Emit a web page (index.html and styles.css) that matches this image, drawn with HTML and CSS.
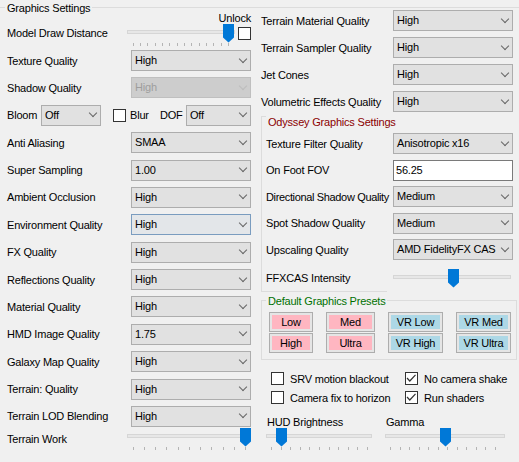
FILE: index.html
```html
<!DOCTYPE html>
<html lang="en">
<head>
  <meta charset="UTF-8">
  <meta name="viewport" content="width=device-width, initial-scale=1.0">
  <title>Graphics Settings</title>
  <link rel="stylesheet" href="styles.css">
</head>
<body>
  <div class="settings">

    <div class="col-left">
      <div class="group-title">Graphics Settings</div>

      <div class="draw-row">
        <span class="unlock-label">Unlock</span>
        <span class="label draw-label">Model Draw Distance</span>
        <div class="slider draw-slider">
          <div class="slider-track"></div>
          <div class="slider-ticks"><i></i><i></i><i></i><i></i><i></i><i></i><i></i><i></i><i></i><i></i><i></i><i></i><i></i><i></i></div>
          <svg class="slider-thumb" style="left: 96px" width="11" height="19" viewBox="0 0 11 19"><path d="M0 0H11V13.5L5.5 18.5L0 13.5Z"/></svg>
        </div>
        <span class="checkbox unlock-box"></span>
      </div>

      <div class="form-rows">
        <span class="label">Texture Quality</span>
        <div class="combo"><span>High</span></div>

        <span class="label">Shadow Quality</span>
        <div class="combo disabled"><span>High</span></div>

        <div class="bloom-row">
          <span class="label bloom-label">Bloom</span>
          <div class="combo bloom-combo"><span>Off</span></div>
          <span class="checkbox blur-box"></span>
          <span class="label blur-label">Blur</span>
          <span class="label dof-label">DOF</span>
          <div class="combo dof-combo"><span>Off</span></div>
        </div>

        <span class="label">Anti Aliasing</span>
        <div class="combo"><span>SMAA</span></div>

        <span class="label">Super Sampling</span>
        <div class="combo"><span>1.00</span></div>

        <span class="label">Ambient Occlusion</span>
        <div class="combo"><span>High</span></div>

        <span class="label">Environment Quality</span>
        <div class="combo focused"><span>High</span></div>

        <span class="label">FX Quality</span>
        <div class="combo"><span>High</span></div>

        <span class="label">Reflections Quality</span>
        <div class="combo"><span>High</span></div>

        <span class="label">Material Quality</span>
        <div class="combo"><span>High</span></div>

        <span class="label">HMD Image Quality</span>
        <div class="combo"><span>1.75</span></div>

        <span class="label">Galaxy Map Quality</span>
        <div class="combo"><span>High</span></div>

        <span class="label">Terrain: Quality</span>
        <div class="combo"><span>High</span></div>

        <span class="label">Terrain LOD Blending</span>
        <div class="combo"><span>High</span></div>
      </div>

      <div class="work-row">
        <span class="label">Terrain Work</span>
        <div class="slider work-slider">
          <div class="slider-track"></div>
          <div class="slider-ticks"><i></i><i></i><i></i><i></i><i></i><i></i><i></i><i></i><i></i><i></i><i></i></div>
          <svg class="slider-thumb" style="left: 113px" width="11" height="19" viewBox="0 0 11 19"><path d="M0 0H11V13.5L5.5 18.5L0 13.5Z"/></svg>
        </div>
      </div>
    </div>

    <div class="col-right">
      <div class="form-rows right-rows">
        <span class="label">Terrain Material Quality</span>
        <div class="combo"><span>High</span></div>

        <span class="label">Terrain Sampler Quality</span>
        <div class="combo"><span>High</span></div>

        <span class="label">Jet Cones</span>
        <div class="combo"><span>High</span></div>

        <span class="label">Volumetric Effects Quality</span>
        <div class="combo"><span>High</span></div>
      </div>

      <div class="group-odyssey">
        <div class="group-title">Odyssey Graphics Settings</div>
        <div class="form-rows odyssey-rows">
          <span class="label">Texture Filter Quality</span>
          <div class="combo"><span>Anisotropic x16</span></div>

          <span class="label">On Foot FOV</span>
          <div class="textbox">56.25</div>

          <span class="label tight">Directional Shadow Quality</span>
          <div class="combo"><span>Medium</span></div>

          <span class="label">Spot Shadow Quality</span>
          <div class="combo"><span>Medium</span></div>

          <span class="label">Upscaling Quality</span>
          <div class="combo"><span>AMD FidelityFX CAS</span></div>
        </div>
        <div class="ffx-row">
          <span class="label">FFXCAS Intensity</span>
          <div class="slider ffx-slider">
            <div class="slider-track"></div>
            <svg class="slider-thumb" style="left: 55px" width="11" height="19" viewBox="0 0 11 19"><path d="M0 0H11V13.5L5.5 18.5L0 13.5Z"/></svg>
          </div>
        </div>
      </div>

      <div class="group-presets">
        <div class="group-title">Default Graphics Presets</div>
        <div class="preset-grid">
          <div class="preset pink">Low</div>
          <div class="preset pink">Med</div>
          <div class="preset blue">VR Low</div>
          <div class="preset blue">VR Med</div>
          <div class="preset pink">High</div>
          <div class="preset pink">Ultra</div>
          <div class="preset blue">VR High</div>
          <div class="preset blue">VR Ultra</div>
        </div>
      </div>

      <div class="check-grid">
        <div class="check-item"><span class="checkbox"></span>SRV motion blackout</div>
        <div class="check-item">
          <span class="checkbox"><svg width="11" height="11" viewBox="0 0 11 11"><polyline points="1,5 3.8,8 9.5,1.8"/></svg></span>No camera shake
        </div>
        <div class="check-item"><span class="checkbox"></span>Camera fix to horizon</div>
        <div class="check-item">
          <span class="checkbox"><svg width="11" height="11" viewBox="0 0 11 11"><polyline points="1,5 3.8,8 9.5,1.8"/></svg></span>Run shaders
        </div>
      </div>

      <div class="bright-row">
        <span class="label">HUD Brightness</span>
        <span class="label">Gamma</span>
        <div class="slider hud-slider">
          <div class="slider-track"></div>
          <div class="slider-ticks"><i></i><i></i><i></i><i></i><i></i><i></i><i></i><i></i><i></i><i></i><i></i></div>
          <svg class="slider-thumb" style="left: 10px" width="11" height="19" viewBox="0 0 11 19"><path d="M0 0H11V13.5L5.5 18.5L0 13.5Z"/></svg>
        </div>
        <div class="slider gamma-slider">
          <div class="slider-track"></div>
          <div class="slider-ticks"><i></i><i></i><i></i><i></i><i></i><i></i><i></i><i></i><i></i><i></i><i></i><i></i></div>
          <svg class="slider-thumb" style="left: 55px" width="11" height="19" viewBox="0 0 11 19"><path d="M0 0H11V13.5L5.5 18.5L0 13.5Z"/></svg>
        </div>
      </div>
    </div>

  </div>
</body>
</html>
```

FILE: styles.css
```css
:root {
  --face: #f0f0f0;
  --line: #dcdcdc;
  --combo: #e1e1e1;
  --combo-border: #adadad;
  --accent: #0078d7;
}

* {
  margin: 0;
  padding: 0;
  box-sizing: border-box;
}

body {
  width: 519px;
  height: 462px;
  overflow: hidden;
  background: var(--face);
  color: #000;
  font-family: "Liberation Sans", Arial, sans-serif;
  font-size: 11px;
  line-height: 12px;
  letter-spacing: -0.2px;
}

.settings {
  margin-top: 7px;
  border-top: 1px solid var(--line);
  display: grid;
  grid-template-columns: 258px 261px;
}

.label {
  white-space: nowrap;
}

.label.tight {
  letter-spacing: -0.35px;
}

.group-title {
  position: relative;
  width: fit-content;
  margin: -6px 0 0 5px;
  padding: 0 2px;
  background: var(--face);
  white-space: nowrap;
}

/* combo boxes */

.combo {
  display: flex;
  align-items: center;
  justify-content: space-between;
  height: 21px;
  padding: 0 4px 0 3px;
  border: 1px solid var(--combo-border);
  background: var(--combo);
  line-height: 19px;
  white-space: nowrap;
}

.combo::after {
  content: "";
  width: 5px;
  height: 5px;
  margin-top: -4px;
  border-right: 1px solid #666;
  border-bottom: 1px solid #666;
  transform: rotate(45deg);
}

.combo.disabled {
  background: #cdcdcd;
  border-color: #bfbfbf;
  color: #9d9d9d;
}

.combo.disabled::after {
  border-color: #bcbcbc;
}

.combo.focused {
  background: #e3e6e9;
  border-color: #7a9cbf;
}

.textbox {
  height: 21px;
  padding-left: 2px;
  border: 1px solid #7a7a7a;
  background: #fff;
  line-height: 19px;
}

.checkbox {
  display: block;
  flex: none;
  width: 13px;
  height: 13px;
  border: 1px solid #333;
  background: #fff;
}

.checkbox svg {
  display: block;
  fill: none;
  stroke: #333;
  stroke-width: 1.2;
}

/* track bars */

.slider {
  position: relative;
  height: 23px;
}

.slider-track {
  margin-top: 6px;
  height: 4px;
  border: 1px solid #d6d6d6;
  background: #e7e7e7;
}

.slider-ticks {
  display: flex;
  justify-content: space-between;
  height: 3px;
  margin-top: 9px;
  padding: 0 5px;
}

.slider-ticks i {
  width: 1px;
  background: #b4b4b4;
}

.slider-thumb {
  position: absolute;
  top: 0;
  fill: var(--accent);
}

/* left column */

.draw-row {
  display: grid;
  grid-template-columns: 127px 108px 3px 13px;
  grid-template-rows: 12px 26px;
  margin-top: -2px;
}

.unlock-label {
  grid-column: 2 / 5;
  grid-row: 1;
  text-align: right;
}

.draw-label {
  grid-column: 1;
  grid-row: 2;
  margin-top: 3px;
  padding-left: 7px;
}

.draw-slider {
  grid-column: 2;
  grid-row: 2;
}

.draw-slider .slider-ticks {
  padding: 0 6px 0 5.5px;
}

.unlock-box {
  grid-column: 4;
  grid-row: 2;
  margin-top: 3px;
}

.form-rows {
  display: grid;
  grid-template-columns: 131px 120px;
  grid-auto-rows: 21px;
  row-gap: 6.38px;
}

.form-rows > .label {
  align-self: center;
  padding-left: 7px;
}

.bloom-row {
  grid-column: 1 / -1;
  display: flex;
  align-items: center;
}

.bloom-label {
  width: 41px;
  padding-left: 7px;
}

.bloom-combo {
  width: 60px;
}

.blur-box {
  margin-left: 12px;
}

.blur-label {
  width: 30px;
  margin-left: 4px;
}

.dof-label {
  width: 26px;
}

.dof-combo {
  width: 65px;
}

.work-row {
  display: grid;
  grid-template-columns: 127px 124px;
  margin-top: 1px;
}

.work-row .label {
  margin-top: 5.5px;
  padding-left: 7px;
}

.work-slider .slider-ticks {
  padding: 0 5px 0 5.5px;
}

/* right column */

.col-right {
  padding: 2px 6px 0 3px;
}

.right-rows {
  grid-template-columns: 132px 120px;
  row-gap: 6px;
}

.right-rows > .label,
.odyssey-rows > .label {
  padding-left: 0;
}

.group-odyssey {
  position: relative;
  margin-top: 10px;
  padding: 0 0 4px 5px;
}

.group-odyssey::before {
  content: "";
  position: absolute;
  left: 0;
  top: 0;
  bottom: 0;
  width: 125px;
  border: 1px solid var(--line);
  border-right: none;
}

.group-odyssey .group-title {
  margin-left: 0;
  color: #8b0000;
}

.odyssey-rows {
  grid-template-columns: 127px 120px;
  row-gap: 5.5px;
  margin-top: 5px;
}

.ffx-row {
  display: grid;
  grid-template-columns: 127px 118px;
  margin-top: 9px;
}

.ffx-row .label {
  margin-top: 3px;
}

.ffx-slider {
  height: 19px;
}

.group-presets {
  margin: 8px -4px 0 0;
  padding-bottom: 6px;
  border: 1px solid var(--line);
}

.group-presets .group-title {
  margin-left: 4px;
  color: #007000;
}

.preset-grid {
  display: grid;
  grid-template-columns: 44px 49px 55px 55px;
  grid-auto-rows: 20px;
  column-gap: 13px;
  row-gap: 1px;
  margin: 5px 0 0 7px;
}

.preset {
  display: flex;
  align-items: center;
  justify-content: center;
  border: 1px solid var(--combo-border);
  box-shadow: inset 0 0 0 2px #e5e5e5;
  white-space: nowrap;
}

.preset.pink {
  background: #ffb6c1;
}

.preset.blue {
  background: #add8e6;
}

.check-grid {
  display: grid;
  grid-template-columns: 134px auto;
  row-gap: 6px;
  margin: 12px 0 0 10px;
}

.check-item {
  display: flex;
  align-items: center;
  gap: 6px;
  height: 13px;
  white-space: nowrap;
}

.bright-row {
  display: grid;
  grid-template-columns: 106px 120px;
  column-gap: 13px;
  margin: 12px 0 0 5px;
}

.bright-row .label {
  padding-left: 1px;
}

.hud-slider .slider-ticks {
  padding: 0 4px 0 5px;
}

.gamma-slider .slider-ticks {
  padding: 0 9px 0 5px;
}
```
